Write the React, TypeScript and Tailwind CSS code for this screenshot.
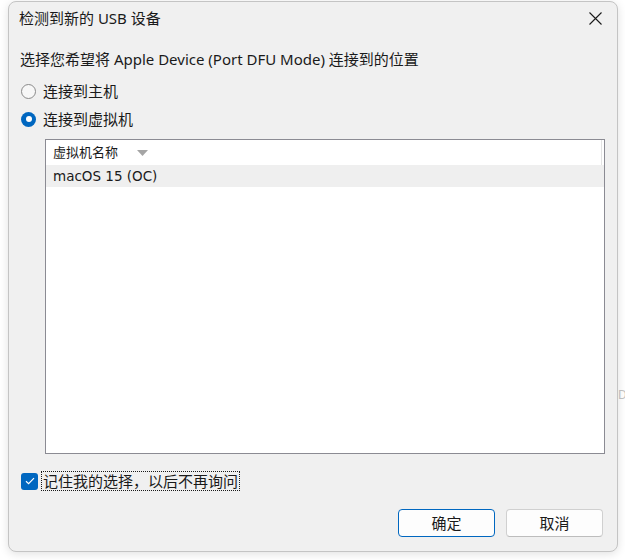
import { useState } from 'react';

const ui = { fontFamily: '"Noto Sans", "Noto Sans CJK SC", sans-serif' };
const listFont = { fontFamily: '"DejaVu Sans", "Noto Sans CJK SC", sans-serif' };

function Radio({ checked }: { checked: boolean }) {
  if (checked) {
    return (
      <span className="flex h-[15px] w-[15px] items-center justify-center rounded-full bg-[#0067c0]">
        <span className="h-[6px] w-[6px] rounded-full bg-white" />
      </span>
    );
  }
  return <span className="h-[15px] w-[15px] rounded-full border border-[#8a8a8a] bg-[#f7f7f7]" />;
}

export default function App() {
  const [target, setTarget] = useState<'host' | 'vm'>('vm');
  const [remember, setRemember] = useState(true);

  return (
    <div className="relative h-[560px] w-[625px] bg-white pl-[8px] pt-[1px]" style={ui}>
      {/* bit of another window peeking out behind */}
      <span className="absolute left-[618px] top-[386px] text-[12px] text-[#c4c4c4]">DI</span>

      <div className="relative flex h-[551px] w-[610px] flex-col rounded-[8px] border border-[#c4c4c4] bg-[#f0f0f0] shadow-[0_2px_10px_rgba(0,0,0,0.12)]">
        {/* title bar */}
        <div className="flex h-[33px] items-center justify-between pl-[10px] pr-[15px]">
          <span className="text-[15px] text-[#1a1a1a]">检测到新的 USB 设备</span>
          <svg width="13" height="13" viewBox="0 0 13 13">
            <path d="M0.5 0.5 L12.5 12.5 M12.5 0.5 L0.5 12.5" stroke="#1a1a1a" strokeWidth="1.1" fill="none" />
          </svg>
        </div>

        <div className="flex flex-1 flex-col pl-[11px] pr-[12px]">
          <p className="mt-[14px] text-[15px] leading-[20px] text-[#1a1a1a]">
            选择您希望将 Apple Device (Port DFU Mode) 连接到的位置
          </p>

          <div className="mt-[8px] flex flex-col">
            <button
              className="flex h-[28px] items-center gap-[7px] pl-[1px] text-[15px] text-[#1a1a1a]"
              onClick={() => setTarget('host')}
            >
              <Radio checked={target === 'host'} />
              连接到主机
            </button>
            <button
              className="flex h-[28px] items-center gap-[7px] pl-[1px] text-[15px] text-[#1a1a1a]"
              onClick={() => setTarget('vm')}
            >
              <Radio checked={target === 'vm'} />
              连接到虚拟机
            </button>
          </div>

          {/* vm list */}
          <div className="ml-[25px] mt-[6px] h-[315px] border border-[#8b8b93] bg-white" style={listFont}>
            <div className="flex h-[25px] items-center border-r border-[#e3e3e3] pl-[7px] mr-[2px] text-[13px] text-[#1a1a1a]">
              <span>虚拟机名称</span>
              <svg className="ml-[19px]" width="11" height="6" viewBox="0 0 11 6">
                <path d="M0 0 L11 0 L5.5 6 Z" fill="#a5a5a5" />
              </svg>
            </div>
            <div className="flex h-[22px] items-center bg-[#efefef] pl-[7px] text-[13.5px] text-[#1a1a1a]">
              macOS 15 (OC)
            </div>
          </div>

          <label className="mt-[17px] flex items-center gap-[3px] pl-[1px]" onClick={() => setRemember(!remember)}>
            <span className="flex h-[17px] w-[17px] items-center justify-center rounded-[3px] bg-[#0067c0]">
              {remember && (
                <svg width="10" height="8" viewBox="0 0 10 8">
                  <path d="M1 4.2 L3.6 6.6 L9 1.2" stroke="white" strokeWidth="1.2" fill="none" />
                </svg>
              )}
            </span>
            <span className="border border-dotted border-[#1a1a1a] px-[1px] text-[15px] leading-[18px] text-[#1a1a1a]">
              记住我的选择，以后不再询问
            </span>
          </label>

          <div className="mt-auto mb-[14px] flex justify-end gap-[11px] pr-[2px]">
            <button className="h-[28px] w-[97px] rounded-[4px] border border-[#0067c0] bg-[#fdfdfd] text-[15px] text-[#1a1a1a]">
              确定
            </button>
            <button className="h-[28px] w-[97px] rounded-[4px] border border-[#d0d0d0] border-b-[#bdbdbd] bg-[#fdfdfd] text-[15px] text-[#1a1a1a]">
              取消
            </button>
          </div>
        </div>
      </div>
    </div>
  );
}
